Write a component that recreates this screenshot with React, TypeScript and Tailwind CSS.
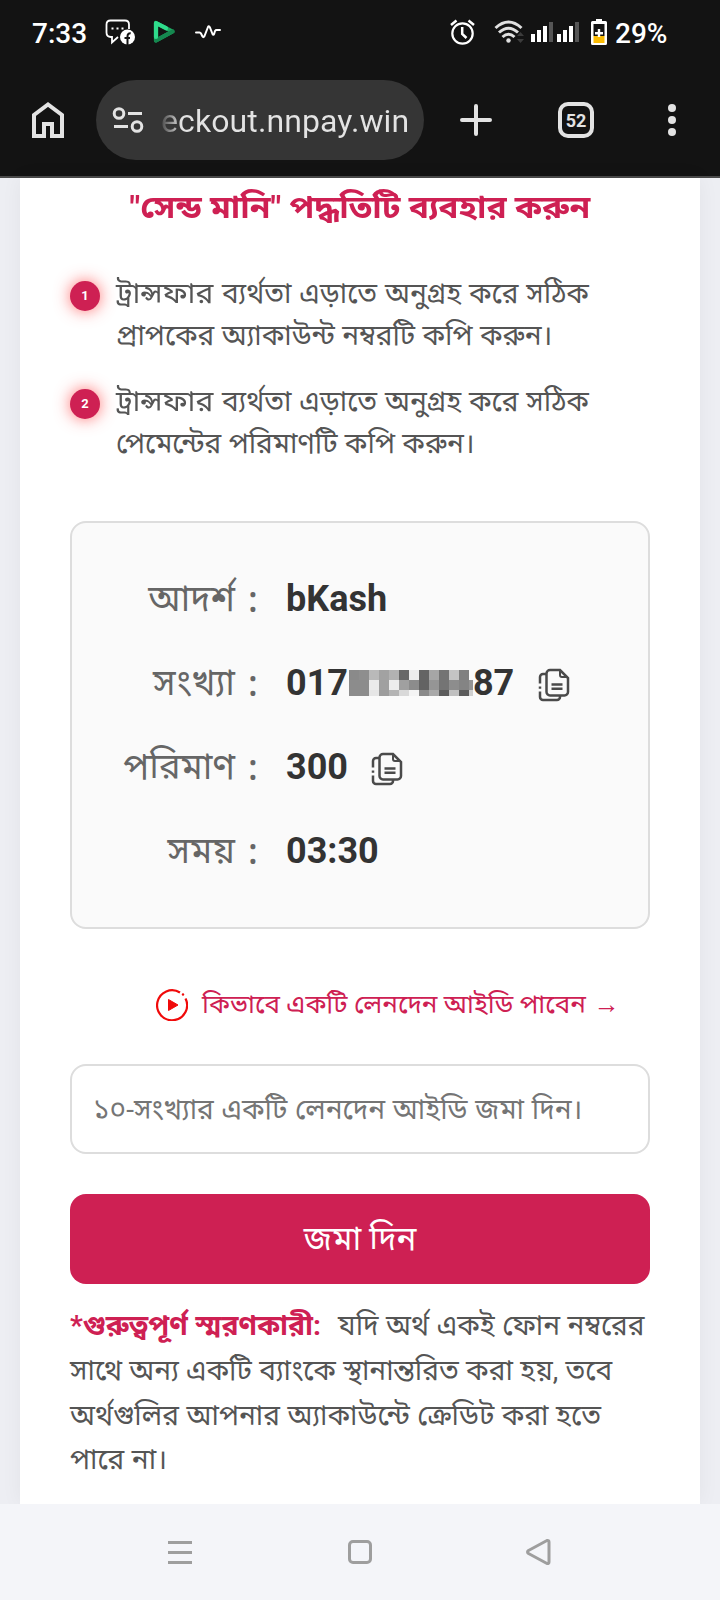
import type { ReactNode } from "react";

const SEND_STEPS = [
  ["ট্রান্সফার", "ব্যর্থতা এড়াতে অনুগ্রহ করে সঠিক", "প্রাপকের অ্যাকাউন্ট নম্বরটি কপি করুন।"],
  ["ট্রান্সফার", "ব্যর্থতা এড়াতে অনুগ্রহ করে সঠিক", "পেমেন্টের পরিমাণটি কপি করুন।"],
];

// one array per mosaic row, 10px cells
const MASK = [
  ["#8a8a8a", "#8e8e8e", "#b9b9b9", "#a2a2a2", "#b2b2b2", "#686868", "#ececec", "#646464", "#a6a6a6", "#747474", "#c4c4c4", "#808080", "#fafafa"],
  ["#8c8c8c", "#8c8c8c", "#ebebeb", "#a0a0a0", "#ededed", "#a0a0a0", "#8c8c8c", "#636363", "#959595", "#747474", "#8d8d8d", "#848484", "#949494"],
  ["#8c8c8c", "#8c8c8c", "#e6e6e6", "#9c9c9c", "#b4b4b4", "#d9d9d9", "#f4f4f4", "#8a8a8a", "#a8a8a8", "#5c5c5c", "#c0c0c0", "#5c5c5c", "#d0d0d0"],
];

function CopyIcon() {
  return (
    <svg width="32" height="34" viewBox="0 0 32 34" fill="none" stroke="#4a4a4a" strokeWidth="2.500">
      <path d="M12 2H22L30 10V24a3.500 3.500 0 0 1-3.500 3.500H12A3.500 3.500 0 0 1 8.500 24V5.500A3.500 3.500 0 0 1 12 2z" />
      <path d="M22 2v5a2 2 0 0 0 2 2h6" strokeWidth="2" />
      <path d="M13.500 16.500h11M13.500 20.800h11" />
      <path d="M8.500 6H5a3 3 0 0 0-3 3v6.500M2 18.500v2.200M2 23.500v5.500a3 3 0 0 0 3 3H19a3 3 0 0 0 3-3v-1" />
    </svg>
  );
}

function Row({ label, children }: { label: string; children: ReactNode }) {
  return (
    <div className="flex h-[84px] items-center text-[36px] leading-[42px]">
      <div className="w-[163px] shrink-0 whitespace-nowrap text-right text-[36.300px] text-[#666]">{label}</div>
      <div className="ml-[13px] w-[38px] shrink-0 font-['Noto_Sans',sans-serif] font-medium text-[#666]">:</div>
      <div className="flex items-center font-bold text-[#333]">{children}</div>
    </div>
  );
}

function StatusBar() {
  return (
    <div className="flex h-16 items-center pl-8 font-medium text-white">
      <span className="w-[73px] pt-[3px] text-[28px]">7:33</span>
      <svg width="30" height="26" viewBox="0 0 30 26" fill="none" stroke="#fff" strokeWidth="1.800">
        <path d="M24 10V5.500Q24 1.500 20 1.500H5.500Q1.500 1.500 1.500 5.500V13.500Q1.500 18 6 18H7V23.500L13 18" />
        <path d="M6.500 9.500h2M11.500 9.500h2M16.500 9.500h2" strokeWidth="2.200" />
        <circle cx="22.500" cy="18" r="7.500" fill="#fff" stroke="none" />
        <path d="M22.500 26v-8.500q0-3.500 3.200-3.200M19.500 19h5.500" stroke="#131313" strokeWidth="2" />
      </svg>
      <svg className="ml-[18px]" width="23" height="24" viewBox="0 0 23 24" strokeLinejoin="round" strokeLinecap="round" fill="none">
        <path d="M3 3V20.500L19.500 11.500z" stroke="#1fa862" strokeWidth="4.200" />
        <path d="M3 20.500L19.500 11.500" stroke="#15874f" strokeWidth="4.200" />
        <path d="M3 17V3L13 8.200" stroke="#2fdc8c" strokeWidth="4.200" />
      </svg>
      <svg className="ml-[19px]" width="26" height="16" viewBox="0 0 26 16" fill="none" stroke="#fff" strokeWidth="2" strokeLinecap="round" strokeLinejoin="round">
        <path d="M1 8.500h3.500q1 0 1.500 1l1.500 3q1 1.500 2-.5L13 3q.8-1.500 1.800.2L17.500 10q.8 1.500 1.600 0L20 7q.6-1 1.600-1H25" />
      </svg>
      <svg className="ml-[229px]" width="25" height="26" viewBox="0 0 25 26" fill="none" stroke="#fff" strokeWidth="2.200">
        <circle cx="12.500" cy="14.500" r="10.200" />
        <path d="M12.200 8v7l4.300 4M1 6L6.500 1.500M24 6L18.500 1.500" strokeWidth="2.500" />
      </svg>
      <svg className="ml-[19px]" width="31" height="24" viewBox="0 0 31 24" fill="none" stroke="#e0e0e0" strokeWidth="3">
        <path d="M1.500 8Q14.500-4 27.500 8M5 12.500Q14.500 4 24 12.500M8.500 17Q14.500 11.500 20.500 17" />
        <circle cx="14.500" cy="20.500" r="2.200" fill="#e0e0e0" stroke="none" />
        <path d="M23 16l3.500-4 3.500 4zM23 19l3.500 4 3.500-4z" fill="#3c3c3c" stroke="none" />
      </svg>
      <svg className="ml-[6px]" width="49" height="21" viewBox="0 0 49 21" fill="#fff">
        <path d="M0 12h4v8H0zM6 8h4v12H6zM12 4h4v16h-4zM26 12h4v8h-4zM32 8h4v12h-4zM38 4h4v16h-4z" />
        <path d="M18 0h4v20h-4zM44 0h4v20h-4z" fill="#555" />
      </svg>
      <svg className="ml-[11px]" width="16" height="26" viewBox="0 0 16 26">
        <path d="M5 0h6v2h3.500q1.500 0 1.500 1.500v21q0 1.500-1.500 1.500h-13Q0 26 0 24.500v-21Q0 2 1.500 2H5z" fill="#fff" />
        <path d="M2.500 5h11v12h-11z" fill="#131313" />
        <path d="M2.500 17h11v7h-11z" fill="#fbbc04" />
        <path d="M6.800 10h2.400v3H12v2.400H9.200V18H6.800v-2.600H4V13h2.800z" fill="#fff" />
      </svg>
      <span className="ml-[8px] pt-[3px] text-[28px]">29%</span>
    </div>
  );
}

function Toolbar() {
  return (
    <div className="flex h-28 items-start pt-4 text-[#e3e3e3]">
      <svg className="ml-8 mt-[22px]" width="32" height="36" viewBox="0 0 32 36" fill="none" stroke="currentColor" strokeWidth="4">
        <path d="M2 34V13L16 2.500 30 13V34H20V22H12V34z" />
      </svg>
      <div className="ml-8 flex h-20 w-[328px] items-center rounded-full bg-[#353535] pl-4">
        <svg width="32" height="26" viewBox="0 0 32 26" fill="none" stroke="currentColor" strokeWidth="3">
          <circle cx="7" cy="6.500" r="4.800" />
          <circle cx="25" cy="19.500" r="4.800" />
          <path d="M16 6.500h14M2 19.500h14" />
        </svg>
        <div className="ml-[17px] mt-[2px] whitespace-nowrap bg-gradient-to-r from-[#4a4a4a] to-[#e3e3e3] to-[20px] bg-clip-text text-[32px] leading-[44px] tracking-[0.1px] text-transparent">
          eckout.nnpay.win
        </div>
      </div>
      <svg className="ml-9 mt-6" width="32" height="32" viewBox="0 0 32 32" fill="none" stroke="currentColor" strokeWidth="4" strokeLinecap="round">
        <path d="M2 16h28M16 2v28" />
      </svg>
      <div className="ml-[66px] mt-[22px] flex size-9 items-center justify-center rounded-[10px] border-4 border-[#e3e3e3] pt-px text-[18px] font-bold leading-none">
        52
      </div>
      <div className="ml-[74px] mt-6 flex flex-col gap-1">
        <i className="size-2 rounded-full bg-[#e3e3e3]" />
        <i className="size-2 rounded-full bg-[#e3e3e3]" />
        <i className="size-2 rounded-full bg-[#e3e3e3]" />
      </div>
    </div>
  );
}

export default function App() {
  return (
    <div className="flex h-[1600px] w-[720px] flex-col overflow-hidden bg-[#edeef3] font-[Roboto,'Noto_Sans_Bengali',sans-serif]">
      <div className="h-[178px] shrink-0 border-b-2 border-[#4a4a4a] bg-[#131313]">
        <StatusBar />
        <Toolbar />
      </div>

      <div className="mx-5 h-[1326px] shrink-0 bg-white px-[50px] shadow-[0_0_20px_rgba(0,0,0,0.05)]">
        <h1 className="flex scale-x-[1.06] justify-center pt-[9px] text-[31.600px] font-bold leading-[42px] whitespace-nowrap text-[#ce2053]">
          "সেন্ড মানি" পদ্ধতিটি ব্যবহার করুন
        </h1>

        <ol className="mt-11 flex flex-col gap-6">
          {SEND_STEPS.map(([first, rest, second], i) => (
            <li key={i} className="flex text-[28px] leading-[42px] text-[#555]">
              <span className="mt-2 mr-4 flex size-[30px] shrink-0 items-center justify-center rounded-full bg-[#ce2053] text-[13px] font-bold text-white shadow-[0_0_16px_rgba(255,50,50,0.7)]">
                {i + 1}
              </span>
              <div className="whitespace-nowrap">
                <div className="h-[42px] [word-spacing:0.9px]">
                  <span className="mr-[7px] inline-block origin-left scale-x-[1.07]">{first}</span> {rest}
                </div>
                <div className="h-[42px] [word-spacing:0.4px]">{second}</div>
              </div>
            </li>
          ))}
        </ol>

        <div className="mt-14 h-[408px] rounded-2xl border-2 border-[#ddd] bg-[#fafafa] py-[34px]">
          <Row label="আদর্শ">bKash</Row>
          <Row label="সংখ্যা">
            017
            <span className="mb-px ml-px grid w-[124px] grid-cols-[repeat(12,10px)_4px] grid-rows-[10px_10px_6px]">
              {MASK.flat().map((c, i) => (
                <i key={i} style={{ background: c }} />
              ))}
            </span>
            87
            <span className="ml-6 mt-1"><CopyIcon /></span>
          </Row>
          <Row label="পরিমাণ">
            300
            <span className="ml-[23px] mt-1"><CopyIcon /></span>
          </Row>
          <Row label="সময়">03:30</Row>
        </div>

        <div className="mt-[53px] flex h-11 items-center pl-[86px] text-[26px] whitespace-nowrap text-[#ce2053]">
          <svg className="mt-px mr-[14px]" width="32" height="32" viewBox="0 0 32 32" fill="none">
            <path d="M24 3.500A15 15 0 1 0 29.500 9.500" stroke="#f00a0a" strokeWidth="2.200" />
            <circle cx="27" cy="5.500" r="1.200" fill="#f00a0a" />
            <path d="M12.500 10.500v11l9.500-5.500z" fill="#f00a0a" stroke="#f00a0a" strokeLinejoin="round" />
          </svg>
          কিভাবে একটি লেনদেন আইডি পাবেন
          <span className="ml-2">→</span>
        </div>

        <input
          className="mt-[38px] block h-[90px] w-full rounded-2xl border-2 border-[#ddd] bg-white px-[21px] text-[28px] [word-spacing:0.8px] placeholder:text-[#757575] placeholder:opacity-100"
          placeholder="১০-সংখ্যার একটি লেনদেন আইডি জমা দিন।"
        />
        <button className="mt-10 block h-[90px] w-full rounded-2xl bg-[#ce2053] text-[33px] text-white">জমা দিন</button>

        <div className="mt-5 text-[28px] leading-[44.800px] whitespace-nowrap text-[#555] [word-spacing:0.6px]">
          <div className="h-[44.800px]">
            <b className="mr-[17px] text-[28.300px] text-[#ce2053]">*গুরুত্বপূর্ণ স্মরণকারী:</b>
            যদি অর্থ একই ফোন নম্বরের
          </div>
          <div className="h-[44.800px] [word-spacing:0.4px]">সাথে অন্য একটি ব্যাংকে স্থানান্তরিত করা হয়, তবে</div>
          <div className="h-[44.800px]">অর্থগুলির আপনার অ্যাকাউন্টে ক্রেডিট করা হতে</div>
          <div className="h-[44.800px]">পারে না।</div>
        </div>
      </div>

      <nav className="flex h-24 shrink-0 items-center bg-[#f4f5f9] pl-[168px]">
        <svg width="384" height="28" viewBox="0 0 384 28" fill="none" stroke="#9e9e9e" strokeWidth="3" strokeLinejoin="round">
          <path d="M0 4.500h24M0 14.500h24M0 24.500h24" />
          <rect x="181.500" y="3.500" width="21" height="21" rx="3.500" />
          <path d="M360.500 12.500L379 2.500q2-.5 2 1.500v20q0 2-2 1.500L360.500 15.500q-2-1.500 0-3z" />
        </svg>
      </nav>
    </div>
  );
}
